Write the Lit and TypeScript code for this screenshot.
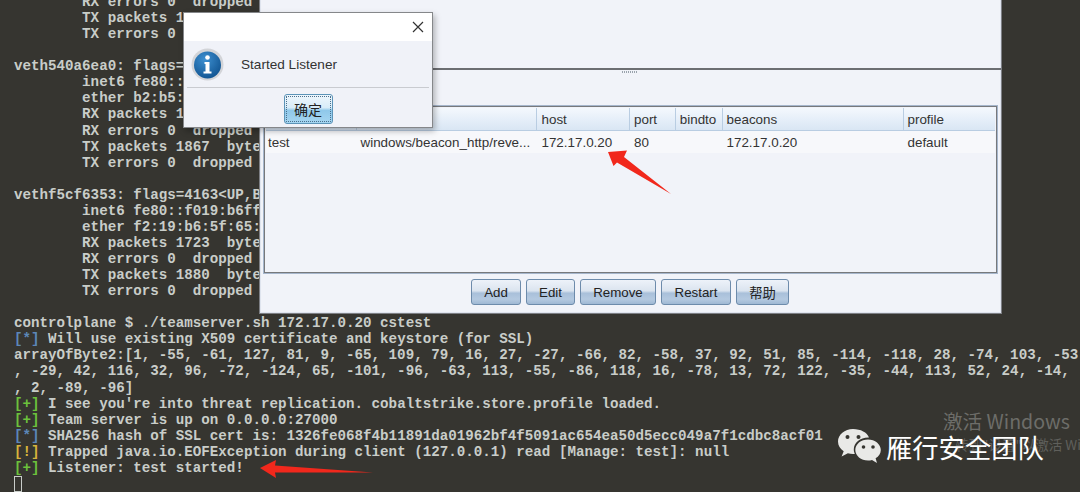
import { LitElement, html, css } from "lit";
import { customElement } from "lit/decorators.js";

type Seg = [string, string?];
const L = (t: string): Seg[] => [[t]];
const T = "        ";
const lines: Seg[][] = [
  L(T + "RX errors 0  dropped"),
  L(T + "TX packets 1"),
  L(T + "TX errors 0"),
  L(""),
  L("veth540a6ea0: flags="),
  L(T + "inet6 fe80::"),
  L(T + "ether b2:b5:"),
  L(T + "RX packets 1"),
  L(T + "RX errors 0  dropped"),
  L(T + "TX packets 1867  byte"),
  L(T + "TX errors 0  dropped"),
  L(""),
  L("vethf5cf6353: flags=4163<UP,B"),
  L(T + "inet6 fe80::f019:b6ff"),
  L(T + "ether f2:19:b6:5f:65:"),
  L(T + "RX packets 1723  byte"),
  L(T + "RX errors 0  dropped"),
  L(T + "TX packets 1880  byte"),
  L(T + "TX errors 0  dropped"),
  L(""),
  L("controlplane $ ./teamserver.sh 172.17.0.20 cstest"),
  [["[*]", "b"], [" Will use existing X509 certificate and keystore (for SSL)"]],
  L("arrayOfByte2:[1, -55, -61, 127, 81, 9, -65, 109, 79, 16, 27, -27, -66, 82, -58, 37, 92, 51, 85, -114, -118, 28, -74, 103, -53"),
  L(", -29, 42, 116, 32, 96, -72, -124, 65, -101, -96, -63, 113, -55, -86, 118, 16, -78, 13, 72, 122, -35, -44, 113, 52, 24, -14,"),
  L(", 2, -89, -96]"),
  [["[+]", "g"], [" I see you're into threat replication. cobaltstrike.store.profile loaded."]],
  [["[+]", "g"], [" Team server is up on 0.0.0.0:27000"]],
  [["[*]", "b"], [" SHA256 hash of SSL cert is: 1326fe068f4b11891da01962bf4f5091ac654ea50d5ecc049a7f1cdbc8acf01"]],
  [["[!]", "y"], [" Trapped java.io.EOFException during client (127.0.0.1) read [Manage: test]: null"]],
  [["[+]", "g"], [" Listener: test started!"]],
];

const cols: [string, number][] = [
  ["name", 91], ["payload", 182], ["host", 93], ["port", 46],
  ["bindto", 47], ["beacons", 182], ["profile", 92],
];
const row = ["test", "windows/beacon_http/reve...", "172.17.0.20", "80", "", "172.17.0.20", "default"];

@customElement("app-root")
export class AppRoot extends LitElement {
  static styles = css`
    :host { display: block; position: relative; width: 1080px; height: 492px; overflow: hidden; background: #363530; }
    .term { margin: -6px 0 0 14px; font: 700 14.2px/16.07px "Liberation Mono", monospace; color: #c9cdc9; }
    .term div { height: 16.07px; white-space: pre; }
    .b { color: #5c87b8; } .g { color: #6cc23c; } .y { color: #d6b43c; }
    .cursor { display: block; width: 8px; height: 16px; border: 1px solid #c9cdc9; box-sizing: border-box; }

    .win { position: absolute; left: 259px; top: -1px; width: 743px; height: 315px; box-sizing: border-box; background: #f1f3f9;
      border: 1px solid #7d7f84; border-top: 0; display: flex; flex-direction: column; box-shadow: 0 0 0 1px #dfe4ee inset; }
    .top { height: 71px; flex: none; border-bottom: 2px solid #6c6e72; box-sizing: border-box; position: relative; }
    .grip { position: absolute; left: 362px; bottom: -5px; width: 16px; height: 2px;
      background: repeating-linear-gradient(90deg, #9aa3ad 0 1px, transparent 1px 2px); }
    .bottom { flex: 1; display: flex; flex-direction: column; padding: 36px 3px 6px 3px; min-height: 0; }
    .table { height: 167px; box-sizing: border-box; border: 1px solid #77797c; outline: 1px solid #a6b6cc; margin: 0 1px; background: #f1f3f9; display: flex; flex-direction: column; padding: 1px; }
    .hdr, .tr { display: flex; font: 13.4px "Liberation Sans", Arial, sans-serif; color: #333; }
    .hdr { height: 23px; flex: none; background: linear-gradient(#f4f8fd, #e6eff9 50%, #d9e6f4); border-bottom: 1px solid #b9cde2; box-sizing: border-box; }
    .hdr span { box-sizing: border-box; padding: 0 4px; display: flex; align-items: center; border-right: 1px solid #b9cde2; white-space: nowrap; overflow: hidden; }
    .hdr span:last-child { border-right: 0; }
    .tr { height: 22px; flex: none; background: #f7f8fb; }
    .tr span { box-sizing: border-box; padding: 0 4px; display: flex; align-items: center; white-space: nowrap; }
    .tr span:first-child { padding-left: 2px; }
    .btns { display: flex; gap: 5px; margin: 6px 0 0 208px; }
    .btn { height: 26px; box-sizing: border-box; border: 1px solid #6d8bab; border-radius: 3px; display: flex; align-items: center; justify-content: center;
      font: 13.3px "Liberation Sans", Arial, "Noto Sans CJK SC", sans-serif; color: #222;
      background: linear-gradient(#edf2f9, #dbe4ef 45%, #a9c0da 55%, #b4c9e0 80%, #9fb8d4); }
    .btn.zh { font-family: "Noto Sans CJK SC", sans-serif; }

    .dlg { position: absolute; left: 183px; top: 12px; width: 250px; height: 116px; box-sizing: border-box; background: #f0f2f8;
      border: 1px solid #85878a; box-shadow: 2px 3px 6px rgba(0,0,0,.28); display: flex; flex-direction: column; font-family: "Liberation Sans", Arial, sans-serif; }
    .dt { height: 28px; flex: none; background: #fff; display: flex; justify-content: flex-end; align-items: center; padding-right: 7px; }
    .db { height: 47px; flex: none; display: flex; align-items: center; gap: 17px; font-size: 13.6px; color: #333; box-sizing: border-box; border-bottom: 1px solid #c9cbd0; margin: 0 3px; padding-left: 4px; }
    .db svg { flex: none; }
    .df { flex: 1; display: flex; justify-content: center; padding-top: 6px; }
    .ok { width: 49px; height: 30px; box-sizing: border-box; border: 1px solid #5c94b8; border-radius: 3px; outline: 1px dotted #4a6f8c; outline-offset: -3px;
      display: flex; align-items: center; justify-content: center; font: 14px "Noto Sans CJK SC", sans-serif; color: #222;
      background: linear-gradient(#eef6fc, #d8ecf8 45%, #8fc8ea 55%, #a6d6f1); }

    .arrow { position: absolute; left: 0; top: 0; pointer-events: none; }
    .wm { position: absolute; left: 943px; top: 409px; font: 19.6px/24px "Noto Sans CJK SC", "Noto Sans", sans-serif; color: #6d6d69; white-space: nowrap; }
    .wm2 { position: absolute; left: 955px; top: 435px; font: 13.5px/18px "Noto Sans CJK SC", "Noto Sans", sans-serif; color: #5f5f5b; white-space: nowrap; }
    .brand { position: absolute; left: 838px; top: 428px; display: flex; align-items: center; gap: 5px; }
    .brand span { font: 400 26.3px/38px "Noto Sans CJK SC", sans-serif; color: #fff; white-space: nowrap; }
  `;

  render() {
    return html`
      <div class="term">
        ${lines.map((l) => html`<div>${l.map(([t, c]) => html`<span class=${c ?? ""}>${t}</span>`)}</div>`)}
        <span class="cursor"></span>
      </div>

      <div class="win">
        <div class="top"><div class="grip"></div></div>
        <div class="bottom">
          <div class="table">
            <div class="hdr">${cols.map(([n, w]) => html`<span style="width:${w}px">${n}</span>`)}</div>
            <div class="tr">${row.map((v, i) => html`<span style="width:${cols[i][1]}px">${v}</span>`)}</div>
          </div>
          <div class="btns">
            <div class="btn" style="width:50px">Add</div>
            <div class="btn" style="width:49px">Edit</div>
            <div class="btn" style="width:76px">Remove</div>
            <div class="btn" style="width:70px">Restart</div>
            <div class="btn zh" style="width:53px">帮助</div>
          </div>
        </div>
      </div>

      <div class="dlg">
        <div class="dt">
          <svg width="14" height="14" viewBox="0 0 14 14"><path d="M2 2l10 10M12 2L2 12" stroke="#333" stroke-width="1.2" fill="none"/></svg>
        </div>
        <div class="db">
          <svg width="33" height="33" viewBox="0 0 33 33">
            <defs>
              <radialGradient id="ig" cx=".4" cy=".3" r=".8"><stop offset="0" stop-color="#3d8fd0"/><stop offset="1" stop-color="#0d4f8c"/></radialGradient>
            </defs>
            <circle cx="16.5" cy="16.5" r="16" fill="#d2d4d8"/>
            <circle cx="16.5" cy="17" r="13.5" fill="url(#ig)"/>
            <circle cx="16.5" cy="9.5" r="2.3" fill="#fff"/>
            <path d="M13.5 14h5v9.5h2V25.5h-8V23.5h2V16h-1z" fill="#fff"/>
          </svg>
          <span>Started Listener</span>
        </div>
        <div class="df"><div class="ok">确定</div></div>
      </div>

      <svg class="arrow" width="1080" height="492" viewBox="0 0 1080 492">
        <path d="M608 152L627 150.500L624 157L671 194L617 162.500L613.500 166Z" fill="#f1281c"/>
        <path d="M260 468L276 460L275 465.500L373 472.500L275 472.500L276 478Z" fill="#f1281c"/>
      </svg>

      <div class="wm">激活 Windows</div>
      <div class="wm2">转到"设置"以激活 Windows</div>
      <div class="brand">
        <svg width="43" height="37" viewBox="0 0 43 37">
          <path d="M15 0C6.700 0 0 5.600 0 12.500c0 4 2.200 7.500 5.700 9.800L3.600 27.500l6.300-3.200c1.600.5 3.300.7 5.100.7 .6 0 1.200 0 1.800-.1C16 23 15.800 21.600 15.800 20.500c0-6.800 6.300-12 14.300-12 .3 0 .6 0 .9 0C29.200 3.500 22.700 0 15 0z" fill="#e9e9e7"/>
          <circle cx="9.500" cy="8" r="2" fill="#363530"/><circle cx="20.500" cy="8" r="2" fill="#363530"/>
          <path d="M30 10.500c-7 0-12.700 4.700-12.700 10.500S23 31.500 30 31.500c1.400 0 2.800-.2 4-.6l5 3-1.400-4.600c3.200-2 5.200-4.900 5.200-8.300C42.800 15.200 37 10.500 30 10.500z" fill="#e9e9e7"/>
          <circle cx="25.500" cy="18" r="1.800" fill="#363530"/><circle cx="35" cy="18" r="1.800" fill="#363530"/>
        </svg>
        <span>雁行安全团队</span>
      </div>
    `;
  }
}
